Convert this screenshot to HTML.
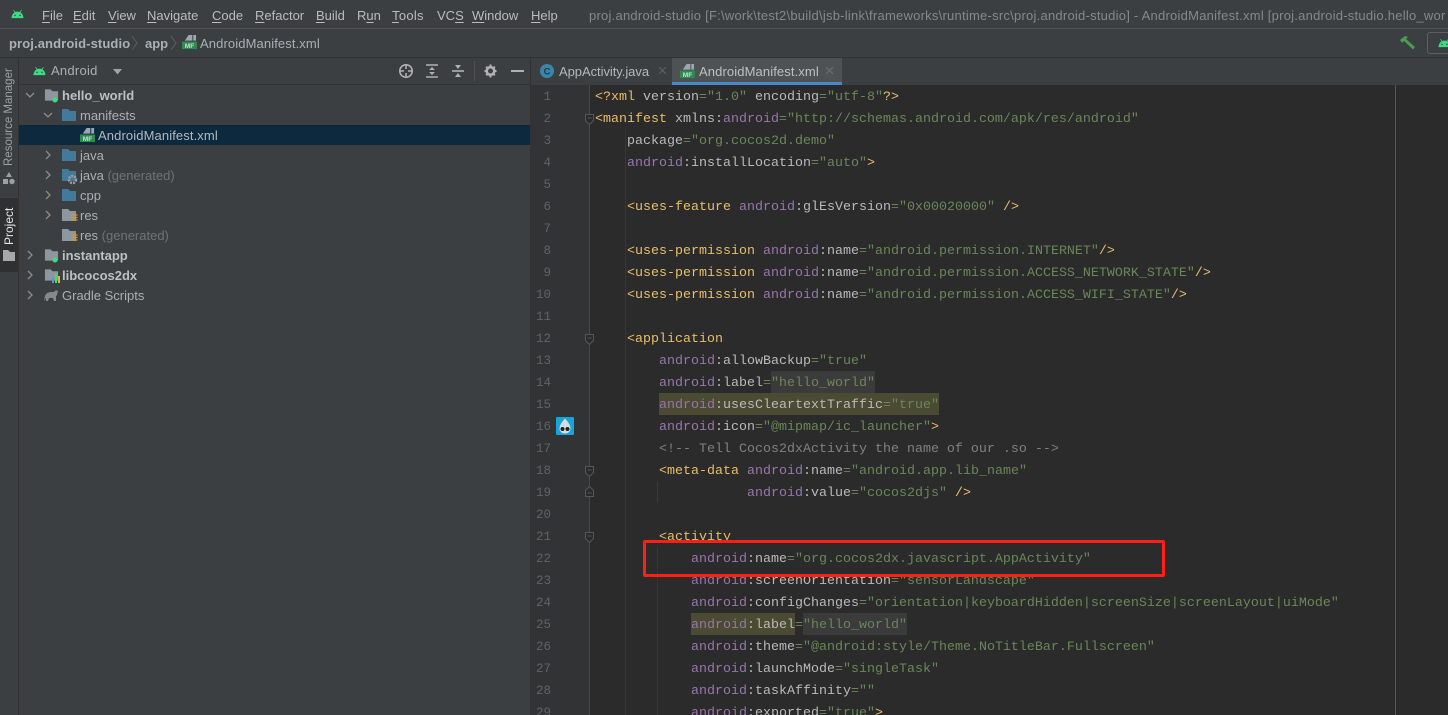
<!DOCTYPE html>
<html><head><meta charset="utf-8"><style>
html,body{margin:0;padding:0;background:#2b2b2b}
#p{position:relative;width:1448px;height:715px;overflow:hidden;background:#3c3f41;font-family:"Liberation Sans",sans-serif;font-size:13px;color:#afb1b3}
#p div,#p span.a,#p svg.a{position:absolute}
.m{top:7px;line-height:17px;color:#bbbbbb;white-space:nowrap}
.m u{text-underline-offset:2px}
.t{line-height:22px;height:20px;white-space:nowrap;color:#a9b0b6}
.t b{color:#bcc0c4}
.t i{font-style:normal;color:#6f7375}
.sp{letter-spacing:.11px}
.n{left:531px;width:20px;text-align:right;font:12.5px/24px "Liberation Mono",monospace;color:#606366;height:22px}
.l{left:595px;font:13.33px/26px "Liberation Mono",monospace;white-space:pre;height:22px;color:#a9b7c6}
.g{color:#e8bf6a}.s{color:#6a8759}.v{color:#9876aa}.c{color:#808080}.w{color:#bababa}
.h1,.h2{display:inline-block;height:22px;vertical-align:top}
.h1{background:#4b4a33}.h2{background:#3b3b3b}
.fold{left:585px;width:9px;height:11px}
</style></head><body><div id="p">
<svg width="0" height="0" style="position:absolute"><defs>
<symbol id="droid" viewBox="0 0 14 10"><path d="M3 0.5l1.6 2.3A6.5 6.5 0 0 1 7 2.4c.9 0 1.700.1 2.400.4L11 .5l.6.4-1.500 2.300C12 4.300 13.200 6.300 13.500 9.500H.5C.8 6.300 2 4.300 3.900 3.200L2.400.9z" fill="#3ddc84"/><circle cx="4.300" cy="6.500" r=".8" fill="#3c3f41"/><circle cx="9.700" cy="6.500" r=".8" fill="#3c3f41"/></symbol>
<symbol id="mf" viewBox="0 0 16 16"><path d="M7 0h4v6H3z" fill="#9aa7b0"/><path d="M12 0h3v6h-3z" fill="#9aa7b0"/><rect x="0" y="7" width="16" height="8" fill="#2f8a52"/><text x="8" y="14" font-family="Liberation Sans" font-size="7" font-weight="700" fill="#c8e0d0" text-anchor="middle">MF</text></symbol>
<symbol id="fb" viewBox="0 0 16 14"><path d="M1 1h6l2 2h6v10H1z" fill="#43799b"/></symbol>
<symbol id="fg" viewBox="0 0 16 14"><path d="M1 1h6l2 2h6v10H1z" fill="#8c979f"/></symbol>
<symbol id="cr" viewBox="0 0 10 10"><path d="M3 1l4 4-4 4" fill="none" stroke="#8a8d8f" stroke-width="1.300"/></symbol>
<symbol id="cd" viewBox="0 0 10 10"><path d="M1 3l4 4 4-4" fill="none" stroke="#8a8d8f" stroke-width="1.300"/></symbol>
<symbol id="fo" viewBox="0 0 9 11"><path d="M.5.500h8v6L4.500 10.500.5 6.500zM2.500 4h4" fill="#2b2b2b" stroke="#555759"/></symbol>
<symbol id="fc" viewBox="0 0 9 11"><path d="M.5 10.500h8v-6L4.500.5.500 4.500zM2.500 7h4" fill="#2b2b2b" stroke="#555759"/></symbol>
<symbol id="res" viewBox="0 0 8 8"><path d="M1 1h6.500M1 3.500h6.500M1 6h6.500" stroke="#d69a2d" stroke-width="1.200" fill="none"/></symbol>
</defs></svg>

<!-- title bar -->
<div style="left:0;top:0;width:1448px;height:28px;background:#3c3f41;border-bottom:1px solid #515151"></div>
<svg class="a" style="left:11px;top:9px" width="13" height="10"><use href="#droid"/></svg>
<div class="m" style="left:42px"><u>F</u>ile</div>
<div class="m" style="left:73px"><u>E</u>dit</div>
<div class="m" style="left:108px"><u>V</u>iew</div>
<div class="m" style="left:147px"><u>N</u>avigate</div>
<div class="m" style="left:212px"><u>C</u>ode</div>
<div class="m" style="left:255px"><u>R</u>efactor</div>
<div class="m" style="left:316px"><u>B</u>uild</div>
<div class="m" style="left:357px">R<u>u</u>n</div>
<div class="m" style="left:392px;letter-spacing:.3px"><u>T</u>ools</div>
<div class="m" style="left:437px">VC<u>S</u></div>
<div class="m" style="left:472px"><u>W</u>indow</div>
<div class="m" style="left:531px"><u>H</u>elp</div>
<div class="m" style="left:589px;color:#85898b;letter-spacing:.24px">proj.android-studio [F:\work\test2\build\jsb-link\frameworks\runtime-src\proj.android-studio] - AndroidManifest.xml [proj.android-studio.hello_wor</div>

<!-- breadcrumb -->
<div style="left:0;top:29px;width:1448px;height:28px;border-bottom:1px solid #323232"></div>
<div class="t sp" style="left:9px;top:33px"><b style="font-weight:700;color:#a9b0b6">proj.android-studio</b></div>
<svg class="a" style="left:131px;top:35px" width="8" height="16"><path d="M1 1l5 7-5 7" fill="none" stroke="#5c5f61"/></svg>
<div class="t" style="left:145px;top:33px"><b style="font-weight:700;color:#a9b0b6">app</b></div>
<svg class="a" style="left:170px;top:35px" width="8" height="16"><path d="M1 1l5 7-5 7" fill="none" stroke="#5c5f61"/></svg>
<svg class="a" style="left:182px;top:35px" width="15" height="15"><use href="#mf"/></svg>
<div class="t sp" style="left:200px;top:33px">AndroidManifest.xml</div>
<svg class="a" style="left:1400px;top:36px" width="16" height="14" viewBox="0 0 16 14"><path d="M0 4l5-4 3 1-2 2 9 8-2 2.500-9-8.500-2 2z" fill="#499c54"/></svg>
<div style="left:1427px;top:32px;width:30px;height:20px;border:1px solid #5e6060;border-radius:3px"></div>
<svg class="a" style="left:1438px;top:38px" width="13" height="10"><use href="#droid"/></svg>

<!-- left strip -->
<div style="left:0;top:58px;width:18px;height:657px;background:#3c3f41;border-right:1px solid #323232"></div>
<div style="left:0;top:198px;width:18px;height:74px;background:#2e3032"></div>
<div style="left:3px;top:166px;width:13px;height:0;white-space:nowrap;font-size:11.500px;line-height:13px;color:#9da0a2;transform-origin:0 0;transform:rotate(-90deg) translateX(0);">Resource Manager</div>
<svg class="a" style="left:3px;top:172px" width="12" height="13"><path d="M6 0l3 5H3z M0 7h5v5H0z" fill="#9da0a2"/><circle cx="9" cy="9.500" r="2.700" fill="#9da0a2"/></svg>
<div style="left:3px;top:245px;width:13px;height:0;white-space:nowrap;font-size:12px;line-height:13px;color:#e4e4e4;transform-origin:0 0;transform:rotate(-90deg);">Project</div>
<svg class="a" style="left:3px;top:250px" width="12" height="11"><path d="M0 0h5l2 2h5v9H0z" fill="#a8a8a8"/></svg>

<!-- project panel -->
<div style="left:19px;top:58px;width:511px;height:657px;background:#3c3f41;border-right:1px solid #323232"></div>
<div style="left:19px;top:84px;width:511px;height:1px;background:#323232"></div>
<svg class="a" style="left:33px;top:66px" width="13" height="10"><use href="#droid"/></svg>
<div class="t" style="left:51px;top:60px;letter-spacing:.25px">Android</div>
<svg class="a" style="left:113px;top:69px" width="10" height="6"><path d="M0 0h9l-4.500 5.500z" fill="#a0a3a5"/></svg>
<svg class="a" style="left:398px;top:63px" width="16" height="16"><circle cx="8" cy="8" r="6.200" fill="none" stroke="#afb1b3" stroke-width="1.600"/><path d="M8 1v5M8 10v5M1 8h5M10 8h5" stroke="#afb1b3" stroke-width="1.500"/></svg>
<svg class="a" style="left:425px;top:63px" width="15" height="16"><path d="M1 2h12M1 14h12" stroke="#afb1b3" stroke-width="1.600"/><path d="M7 4l3 3H4zM7 12l3-3H4z" fill="#afb1b3"/></svg>
<svg class="a" style="left:451px;top:63px" width="15" height="16"><path d="M1 8h12" stroke="#afb1b3" stroke-width="1.600"/><path d="M7 6L4 2h6zM7 10l3 4H4z" fill="#afb1b3"/></svg>
<div style="left:474px;top:61px;width:1px;height:20px;background:#515151"></div>
<svg class="a" style="left:483px;top:63px" width="15" height="16" viewBox="0 0 15 16"><circle cx="7.500" cy="8" r="3.800" fill="none" stroke="#afb1b3" stroke-width="2.600"/><path d="M7.500 1.500v3M7.500 11.500v3M1.500 8h3M10.500 8h3M3.200 3.700l2 2M9.800 10.300l2 2M3.200 12.300l2-2M9.800 5.700l2-2" stroke="#afb1b3" stroke-width="2"/></svg>
<div style="left:511px;top:70px;width:13px;height:2px;background:#afb1b3"></div>

<div style="left:19px;top:125px;width:511px;height:20px;background:#0d293e"></div>
<svg class="a" style="left:25px;top:90px" width="10" height="10"><use href="#cd"/></svg>
<svg class="a" style="left:44px;top:88px" width="15" height="14"><use href="#fg"/></svg>
<svg class="a" style="left:52px;top:97px" width="6" height="6"><circle cx="3" cy="3" r="2.500" fill="#3ddc84"/></svg>
<div class="t" style="left:62px;top:85px"><b>hello_world</b></div>
<svg class="a" style="left:43px;top:110px" width="10" height="10"><use href="#cd"/></svg>
<svg class="a" style="left:61px;top:108px" width="16" height="14"><use href="#fb"/></svg>
<div class="t" style="left:80px;top:105px">manifests</div>
<svg class="a" style="left:80px;top:128px" width="15" height="15"><use href="#mf"/></svg>
<div class="t sp" style="left:98px;top:125px;color:#b4b8bb">AndroidManifest.xml</div>
<svg class="a" style="left:43px;top:150px" width="10" height="10"><use href="#cr"/></svg>
<svg class="a" style="left:61px;top:148px" width="16" height="14"><use href="#fb"/></svg>
<div class="t" style="left:80px;top:145px">java</div>
<svg class="a" style="left:43px;top:170px" width="10" height="10"><use href="#cr"/></svg>
<svg class="a" style="left:61px;top:168px" width="16" height="14"><use href="#fb"/></svg>
<svg class="a" style="left:67px;top:174px" width="11" height="11"><circle cx="5.500" cy="5.500" r="3.500" fill="none" stroke="#9aa0a4" stroke-width="2.500" stroke-dasharray="2 1"/></svg>
<div class="t" style="left:80px;top:165px">java <i>(generated)</i></div>
<svg class="a" style="left:43px;top:190px" width="10" height="10"><use href="#cr"/></svg>
<svg class="a" style="left:61px;top:188px" width="16" height="14"><use href="#fb"/></svg>
<div class="t" style="left:80px;top:185px">cpp</div>
<svg class="a" style="left:43px;top:210px" width="10" height="10"><use href="#cr"/></svg>
<svg class="a" style="left:61px;top:208px" width="16" height="14"><use href="#fg"/></svg>
<svg class="a" style="left:70px;top:214px" width="8" height="8"><use href="#res"/></svg>
<div class="t" style="left:80px;top:205px">res</div>
<svg class="a" style="left:61px;top:228px" width="16" height="14"><use href="#fg"/></svg>
<svg class="a" style="left:70px;top:234px" width="8" height="8"><use href="#res"/></svg>
<div class="t" style="left:80px;top:225px">res <i>(generated)</i></div>
<svg class="a" style="left:25px;top:250px" width="10" height="10"><use href="#cr"/></svg>
<svg class="a" style="left:44px;top:248px" width="15" height="14"><use href="#fg"/></svg>
<svg class="a" style="left:52px;top:257px" width="6" height="6"><circle cx="3" cy="3" r="2.500" fill="#3ddc84"/></svg>
<div class="t" style="left:62px;top:245px"><b>instantapp</b></div>
<svg class="a" style="left:25px;top:270px" width="10" height="10"><use href="#cr"/></svg>
<svg class="a" style="left:44px;top:268px" width="15" height="14"><use href="#fg"/></svg>
<svg class="a" style="left:51px;top:274px" width="10" height="9"><path d="M1 4h2v5H1z" fill="#4a9ec4"/><path d="M4 0h2v9H4z" fill="#3ddc84"/><path d="M7 2h2v7H7z" fill="#e0b040"/></svg>
<div class="t" style="left:62px;top:265px"><b>libcocos2dx</b></div>
<svg class="a" style="left:25px;top:290px" width="10" height="10"><use href="#cr"/></svg>
<svg class="a" style="left:43px;top:289px" width="16" height="13"><path d="M1 12l1-5c1-3 4-4 6-4h3c1-2 3-2 4-1l-1 4-1 1v5h-2l-1-3H6l-1 3H3V9z" fill="#85898b"/></svg>
<div class="t" style="left:62px;top:285px">Gradle Scripts</div>

<!-- tabs -->
<div style="left:531px;top:58px;width:917px;height:27px;background:#3c3f41;border-bottom:1px solid #323232"></div>
<div style="left:672px;top:58px;width:170px;height:24px;background:#4e5254"></div>
<div style="left:672px;top:82px;width:170px;height:3px;background:#4a88c7"></div>
<svg class="a" style="left:540px;top:64px" width="14" height="14"><circle cx="7" cy="7" r="7" fill="#3a86a8"/><text x="7" y="10.500" font-family="Liberation Sans" font-size="9.500" font-weight="700" fill="#1f3a47" text-anchor="middle">C</text></svg>
<div class="t" style="left:559px;top:61px;color:#b4b8bb;letter-spacing:-.05px">AppActivity.java</div>
<svg class="a" style="left:659px;top:67px" width="8" height="8"><path d="M0 0l7 7M7 0L0 7" stroke="#5f6365"/></svg>
<svg class="a" style="left:680px;top:64px" width="15" height="15"><use href="#mf"/></svg>
<div class="t sp" style="left:699px;top:61px;color:#bcc0c4">AndroidManifest.xml</div>
<svg class="a" style="left:826px;top:67px" width="8" height="8"><path d="M0 0l7 7M7 0L0 7" stroke="#6d7072"/></svg>

<!-- editor -->
<div style="left:531px;top:85px;width:917px;height:630px;background:#2b2b2b"></div>
<div style="left:531px;top:85px;width:58px;height:630px;background:#313335"></div>
<div style="left:589px;top:85px;width:1px;height:630px;background:#47494b"></div>
<div style="left:1395px;top:85px;width:1px;height:630px;background:#555555"></div>
<div style="left:625px;top:129px;width:1px;height:586px;background:#373737"></div>
<div style="left:657px;top:481px;width:1px;height:22px;background:#3a3a3a"></div>
<div style="left:657px;top:547px;width:1px;height:168px;background:#373737"></div>

<div class="n" style="top:85px">1</div><div class="n" style="top:107px">2</div><div class="n" style="top:129px">3</div><div class="n" style="top:151px">4</div><div class="n" style="top:173px">5</div><div class="n" style="top:195px">6</div><div class="n" style="top:217px">7</div><div class="n" style="top:239px">8</div><div class="n" style="top:261px">9</div><div class="n" style="top:283px">10</div><div class="n" style="top:305px">11</div><div class="n" style="top:327px">12</div><div class="n" style="top:349px">13</div><div class="n" style="top:371px">14</div><div class="n" style="top:393px">15</div><div class="n" style="top:415px">16</div><div class="n" style="top:437px">17</div><div class="n" style="top:459px">18</div><div class="n" style="top:481px">19</div><div class="n" style="top:503px">20</div><div class="n" style="top:525px">21</div><div class="n" style="top:547px">22</div><div class="n" style="top:569px">23</div><div class="n" style="top:591px">24</div><div class="n" style="top:613px">25</div><div class="n" style="top:635px">26</div><div class="n" style="top:657px">27</div><div class="n" style="top:679px">28</div><div class="n" style="top:701px">29</div>

<svg class="a fold" style="top:114px" viewBox="0 0 9 11"><use href="#fo"/></svg>
<svg class="a fold" style="top:334px" viewBox="0 0 9 11"><use href="#fo"/></svg>
<svg class="a fold" style="top:466px" viewBox="0 0 9 11"><use href="#fo"/></svg>
<svg class="a fold" style="top:486px" viewBox="0 0 9 11"><use href="#fc"/></svg>
<svg class="a fold" style="top:532px" viewBox="0 0 9 11"><use href="#fo"/></svg>

<svg class="a" style="left:556px;top:417px" width="18" height="18" viewBox="0 0 18 18"><rect width="18" height="18" rx="1" fill="#18a4d8"/><path d="M9 1.500C6 5 3.500 8 3.500 11.500c0 3 2.500 5 5.500 5s5.500-2 5.500-5C14.500 8 12 5 9 1.500z" fill="#d8dcdf"/><circle cx="6.500" cy="12" r="2" fill="#1b2328"/><circle cx="11.500" cy="12" r="2" fill="#1b2328"/></svg>

<div class="l" style="top:85px"><span class="g">&lt;?xml</span> <span class="w">version</span><span class="s">="1.0"</span> <span class="w">encoding</span><span class="s">="utf-8"</span><span class="g">?&gt;</span></div>
<div class="l" style="top:107px"><span class="g">&lt;manifest</span> <span class="w">xmlns:</span><span class="v">android</span><span class="s">="http://schemas.android.com/apk/res/android"</span></div>
<div class="l" style="top:129px">    <span class="w">package</span><span class="s">="org.cocos2d.demo"</span></div>
<div class="l" style="top:151px">    <span class="v">android</span><span class="w">:installLocation</span><span class="s">="auto"</span><span class="g">&gt;</span></div>
<div class="l" style="top:195px">    <span class="g">&lt;uses-feature</span> <span class="v">android</span><span class="w">:glEsVersion</span><span class="s">="0x00020000"</span> <span class="g">/&gt;</span></div>
<div class="l" style="top:239px">    <span class="g">&lt;uses-permission</span> <span class="v">android</span><span class="w">:name</span><span class="s">="android.permission.INTERNET"</span><span class="g">/&gt;</span></div>
<div class="l" style="top:261px">    <span class="g">&lt;uses-permission</span> <span class="v">android</span><span class="w">:name</span><span class="s">="android.permission.ACCESS_NETWORK_STATE"</span><span class="g">/&gt;</span></div>
<div class="l" style="top:283px">    <span class="g">&lt;uses-permission</span> <span class="v">android</span><span class="w">:name</span><span class="s">="android.permission.ACCESS_WIFI_STATE"</span><span class="g">/&gt;</span></div>
<div class="l" style="top:327px">    <span class="g">&lt;application</span></div>
<div class="l" style="top:349px">        <span class="v">android</span><span class="w">:allowBackup</span><span class="s">="true"</span></div>
<div class="l" style="top:371px">        <span class="v">android</span><span class="w">:label</span><span class="s">=</span><span class="s h2">"hello_world"</span></div>
<div class="l" style="top:393px">        <span class="h1"><span class="v">android</span><span class="w">:usesCleartextTraffic</span><span class="s">="true"</span></span></div>
<div class="l" style="top:415px">        <span class="v">android</span><span class="w">:icon</span><span class="s">="@mipmap/ic_launcher"</span><span class="g">&gt;</span></div>
<div class="l" style="top:437px">        <span class="c">&lt;!-- Tell Cocos2dxActivity the name of our .so --&gt;</span></div>
<div class="l" style="top:459px">        <span class="g">&lt;meta-data</span> <span class="v">android</span><span class="w">:name</span><span class="s">="android.app.lib_name"</span></div>
<div class="l" style="top:481px">                   <span class="v">android</span><span class="w">:value</span><span class="s">="cocos2djs"</span> <span class="g">/&gt;</span></div>
<div class="l" style="top:525px">        <span class="g">&lt;activity</span></div>
<div class="l" style="top:547px">            <span class="v">android</span><span class="w">:name</span><span class="s">="org.cocos2dx.javascript.AppActivity"</span></div>
<div class="l" style="top:569px">            <span class="v">android</span><span class="w">:screenOrientation</span><span class="s">="sensorLandscape"</span></div>
<div class="l" style="top:591px">            <span class="v">android</span><span class="w">:configChanges</span><span class="s">="orientation|keyboardHidden|screenSize|screenLayout|uiMode"</span></div>
<div class="l" style="top:613px">            <span class="h1"><span class="v">android</span><span class="w">:label</span></span><span class="s">=</span><span class="s h2">"hello_world"</span></div>
<div class="l" style="top:635px">            <span class="v">android</span><span class="w">:theme</span><span class="s">="@android:style/Theme.NoTitleBar.Fullscreen"</span></div>
<div class="l" style="top:657px">            <span class="v">android</span><span class="w">:launchMode</span><span class="s">="singleTask"</span></div>
<div class="l" style="top:679px">            <span class="v">android</span><span class="w">:taskAffinity</span><span class="s">=""</span></div>
<div class="l" style="top:701px">            <span class="v">android</span><span class="w">:exported</span><span class="s">="true"</span><span class="g">&gt;</span></div>

<div style="left:643px;top:540px;width:516px;height:31px;border:3px solid #ff1f14;border-radius:2px"></div>
</div></body></html>
